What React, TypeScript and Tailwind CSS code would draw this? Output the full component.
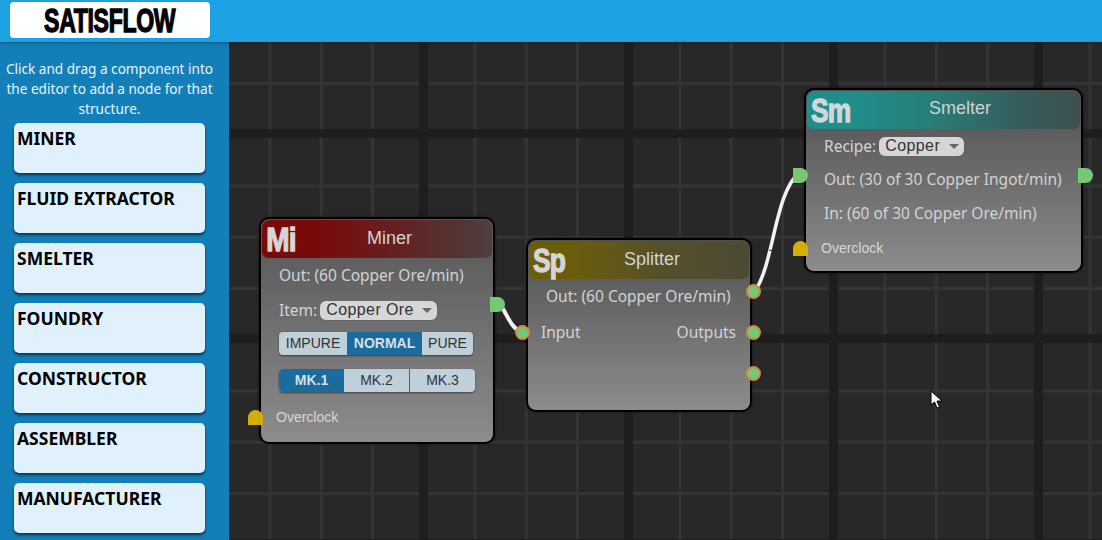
import React from "react";

const impact = "font-['Liberation_Sans',sans-serif] font-bold [-webkit-text-stroke:1.3px_currentColor]";
const segoe = "font-['Noto_Sans','Open_Sans',sans-serif]";
const arial = "font-['Liberation_Sans',Arial,sans-serif]";

const items = ["MINER", "FLUID EXTRACTOR", "SMELTER", "FOUNDRY", "CONSTRUCTOR", "ASSEMBLER", "MANUFACTURER"];

function OutSocket({ className }: { className: string }) {
  return <div className={`absolute w-[15px] h-[15px] bg-[#76c776] rounded-tr-[8px] rounded-br-[8px] ${className}`} />;
}
function Overclock({ className }: { className: string }) {
  return <div className={`absolute w-[15px] h-[15px] bg-[#d4ae06] rounded-tl-[8px] rounded-tr-[8px] ${className}`} />;
}
function InSocket({ className }: { className: string }) {
  return <div className={`absolute w-[15px] h-[15px] rounded-full bg-[#76c776] border-2 border-[#d08a4c] ${className}`} />;
}
function Head({ abbr, title, grad, titleCls, abbrCls }: { abbr: string; title: string; grad: string; titleCls: string; abbrCls: string }) {
  return (
    <div className={`h-[38px] rounded-t-[8px] rounded-b-[6px] flex items-center relative ${grad}`}>
      <span className={`${impact} text-[33px] leading-none text-[#d6d6d6] pl-[5px] origin-left tracking-[-1px] ${abbrCls}`}>{abbr}</span>
      <span className={`${arial} absolute text-[18px] leading-none text-[#d2d2d2] ${titleCls}`}>{title}</span>
    </div>
  );
}
function Select({ label, w }: { label: string; w: string }) {
  return (
    <span className={`inline-flex items-center justify-between h-[19px] rounded-[6px] bg-[#d6d6d6] shadow-[0_1px_0_#666] pl-[6px] pr-[5px] text-[#333] text-[16px] ${arial} ${w}`}>
      <span className="tracking-[0.4px] leading-none">{label}</span>
      <span className="w-0 h-0 border-x-[5px] border-x-transparent border-t-[5px] border-t-[#666]" />
    </span>
  );
}

export default function App() {
  return (
    <div className="w-[1102px] h-[540px] overflow-hidden flex flex-col bg-[#282828]">
      <header className="h-[42px] shrink-0 bg-[#1ca1e2] z-10 pt-[2px] pl-[10px] shadow-[0_1px_3px_rgba(0,0,0,0.35)]">
        <div className="w-[200px] h-[36px] bg-white rounded-[4px] flex items-center justify-center">
          <span className={`${impact} text-[33px] leading-none text-black inline-block scale-x-[0.7] tracking-[-0.5px]`}>SATISFLOW</span>
        </div>
      </header>
      <div className="flex flex-1 min-h-0">
        <aside className="w-[229px] shrink-0 bg-[#137fb8] flex flex-col overflow-hidden pl-[14px]">
          <p className={`${segoe} text-[13.6px] leading-5 text-[#e8f4fb] text-center mt-[17px] -ml-[14px] w-[219px] whitespace-nowrap`}>
            Click and drag a component into<br />the editor to add a node for that<br />structure.
          </p>
          <div className="flex flex-col gap-[10px] mt-[4px] w-[191px]">
            {items.map((t) => (
              <div key={t} className={`${segoe} h-[50px] shrink-0 bg-[#e1f1fc] rounded-[5px] shadow-[0_2px_3px_rgba(0,0,0,0.6)] pl-[3px] pt-[3px] text-[17.5px] leading-[24px] font-bold text-black`}>
                {t}
              </div>
            ))}
          </div>
        </aside>
        <main className="relative flex-1 bg-[#282828] bg-[linear-gradient(to_right,#1e1e1e_9px,transparent_9px),linear-gradient(to_bottom,#1e1e1e_9px,transparent_9px),linear-gradient(to_right,#343434_3px,transparent_3px),linear-gradient(to_bottom,#343434_3px,transparent_3px)] bg-[size:205px_205px,205px_205px,51.25px_51.25px,51.25px_51.25px] bg-[position:190px_87px,190px_87px,39.5px_40px,39.5px_40px] overflow-hidden">
          {/* connections */}
          <svg className="absolute left-0 top-0 w-[873px] h-[498px]" fill="none">
            <path d="M272 264 C278 272 282 286 292 290" stroke="#f2f2ee" strokeWidth="4" />
            <path d="M525 250 C545 225 545 150 571 130" stroke="#f2f2ee" strokeWidth="3.5" />
            <path d="M540 208 L545 209" stroke="#2a2a2a" strokeWidth="1" />
          </svg>

          {/* Miner */}
          <div className="absolute left-[30px] top-[175px] w-[236px] h-[227px] rounded-[10px] border-2 border-black bg-[linear-gradient(to_bottom,#555555,#8c8c8c)] p-[1px] shadow-[0_0_3px_rgba(0,0,0,0.5)]">
            <Head abbr="Mi" title="Miner" titleCls="left-[105px] top-[9px]" abbrCls="scale-x-[0.85]" grad="bg-[linear-gradient(to_right,#7a0a0a_25%,#553333_85%,#4f3f3f)]" />
            <div className={`${segoe} text-[15.5px] leading-5 text-[#d3d3d3] pl-[17px]`}>
              <div className="mt-[7px] whitespace-nowrap">Out: (60 Copper Ore/min)</div>
              <div className="mt-[15px] flex items-center gap-[3px]"><span>Item:</span><Select label="Copper Ore" w="w-[117px]" /></div>
              <div className={`${arial} mt-[12px] flex w-[194px] h-[23px] rounded-[4px] overflow-hidden text-[14px] leading-[23px] text-center text-[#333] bg-[#bfd0db] shadow-[0_1px_2px_rgba(0,0,0,0.5)]`}>
                <span className="w-[68px]">IMPURE</span>
                <span className="w-[75px] bg-[#1a6c9e] text-[#d7dfe4] font-bold">NORMAL</span>
                <span className="w-[51px]">PURE</span>
              </div>
              <div className={`${arial} mt-[14px] flex w-[196px] h-[23px] rounded-[4px] overflow-hidden text-[14px] leading-[23px] text-center text-[#333] bg-[#bfd0db] shadow-[0_1px_2px_rgba(0,0,0,0.5)]`}>
                <span className="w-[65px] bg-[#1a6c9e] text-[#d7dfe4] font-bold">MK.1</span>
                <span className="w-[66px] border-r border-[#1a6c9e]">MK.2</span>
                <span className="w-[65px]">MK.3</span>
              </div>
              <div className={`${arial} mt-[15px] -ml-[3px] text-[14px] leading-5 text-[#d6d6d6]`}>Overclock</div>
            </div>
            <OutSocket className="left-[229px] top-[78px]" />
            <Overclock className="left-[-13px] top-[191px]" />
          </div>

          {/* Splitter */}
          <div className="absolute left-[297px] top-[196px] w-[226px] h-[174px] rounded-[10px] border-2 border-black bg-[linear-gradient(to_bottom,#505050,#8c8c8c)] p-[1px] shadow-[0_0_3px_rgba(0,0,0,0.5)]">
            <Head abbr="Sp" title="Splitter" titleCls="left-[95px] top-[9px]" abbrCls="scale-x-[0.8]" grad="bg-[linear-gradient(to_right,#6b5d0a_20%,#55502a_60%,#4d4a35)]" />
            <div className={`${segoe} text-[15.5px] leading-5 text-[#d3d3d3]`}>
              <div className="mt-[7px] pl-[17px] whitespace-nowrap">Out: (60 Copper Ore/min)</div>
              <div className="mt-[16px] pl-[12px] pr-[13px] flex justify-between"><span>Input</span><span>Outputs</span></div>
            </div>
            <InSocket className="left-[-13px] top-[85px]" />
            <InSocket className="left-[218px] top-[44px]" />
            <InSocket className="left-[218px] top-[85px]" />
            <InSocket className="left-[218px] top-[126px]" />
          </div>

          {/* Smelter */}
          <div className="absolute left-[575px] top-[46px] w-[279px] h-[185px] rounded-[10px] border-2 border-black bg-[linear-gradient(to_bottom,#4f4f4f,#8c8c8c)] p-[1px] shadow-[0_0_3px_rgba(0,0,0,0.5)]">
            <Head abbr="Sm" title="Smelter" titleCls="left-[122px] top-[8px]" abbrCls="scale-x-[0.8]" grad="bg-[linear-gradient(to_right,#1f8f8c_15%,#2a7a74_50%,#33605f_75%,#3f4f4f)]" />
            <div className={`${segoe} text-[15.5px] leading-5 text-[#d3d3d3] pl-[17px]`}>
              <div className="mt-[7px] flex items-center gap-[3px]"><span>Recipe:</span><Select label="Copper" w="w-[85px]" /></div>
              <div className="mt-[13px] whitespace-nowrap">Out: (30 of 30 Copper Ingot/min)</div>
              <div className="mt-[14px] whitespace-nowrap">In: (60 of 30 Copper Ore/min)</div>
              <div className={`${arial} mt-[15px] -ml-[3px] text-[14px] leading-5 text-[#d6d6d6]`}>Overclock</div>
            </div>
            <OutSocket className="left-[-13px] top-[78px]" />
            <OutSocket className="left-[272px] top-[78px]" />
            <Overclock className="left-[-13px] top-[151px]" />
          </div>

          {/* cursor */}
          <svg className="absolute left-[701px] top-[348px] w-[14px] h-[20px]" viewBox="0 0 14 20">
            <path d="M1 1 L1 15 L4.5 12 L7 18 L9.5 17 L7 11 L12 11 Z" fill="#fff" stroke="#000" strokeWidth="1" />
          </svg>
        </main>
      </div>
    </div>
  );
}
